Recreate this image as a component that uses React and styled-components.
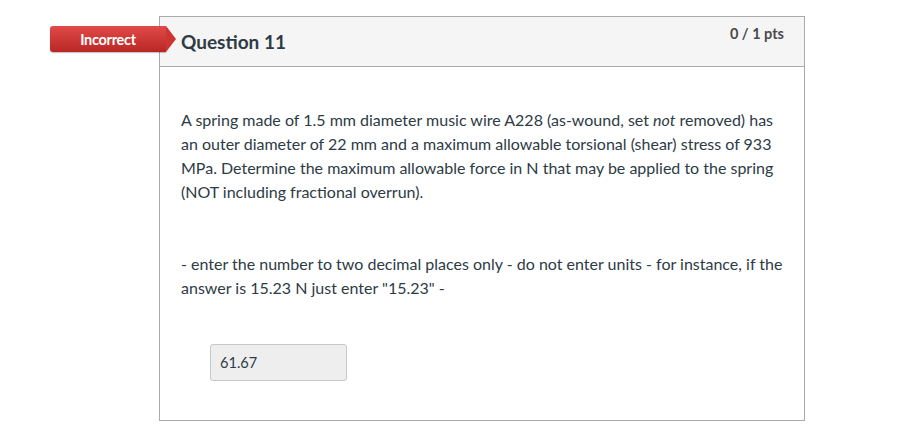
import React from "react";
import styled, { createGlobalStyle } from "styled-components";

const Global = createGlobalStyle`
  html, body { margin: 0; padding: 0; background: #fff; }
  body { font-family: Lato, "Open Sans", "Liberation Sans", sans-serif; color: #2d3b45; }
`;

const Page = styled.div`
  width: 904px;
  height: 436px;
  padding: 16px 0 0 159px;
  box-sizing: border-box;
`;

const Card = styled.div`
  position: relative;
  width: 646px;
  height: 405px;
  box-sizing: border-box;
  border: 1px solid #aaaaaa;
  display: flex;
  flex-direction: column;
`;

const Badge = styled.div`
  position: absolute;
  left: -110px;
  top: 9px;
  width: 116px;
  height: 26px;
  box-sizing: border-box;
  border-radius: 3px 0 0 3px;
  background: linear-gradient(#e14a48, #b92724);
  color: #fff;
  font-size: 14.5px;
  font-weight: 700;
  display: flex;
  align-items: center;
  justify-content: center;
  letter-spacing: -0.3px;
  box-shadow: 0 1px 1px rgba(0,0,0,0.25);
  &::after {
    content: "";
    position: absolute;
    right: -10px;
    top: 0;
    border-top: 13px solid transparent;
    border-bottom: 13px solid transparent;
    border-left: 10px solid #cc3532;
  }
`;

const Header = styled.div`
  height: 50px;
  box-sizing: border-box;
  background: #f5f5f5;
  border-bottom: 1px solid #aaaaaa;
  display: flex;
  justify-content: space-between;
  align-items: flex-start;
  padding: 0 20px 0 21px;
`;

const Title = styled.h2`
  margin: 0;
  padding-top: 13px;
  font-size: 19px;
  font-weight: 700;
  color: #2d3b45;
  line-height: 24px;
`;

const Points = styled.div`
  padding-top: 8px;
  font-size: 14.5px;
  font-weight: 700;
  color: #4a4a4a;
  line-height: 18px;
`;

const Body = styled.div`
  padding: 29px 21px 0 21px;
  font-size: 16px;
  line-height: 24px;
  color: #2d3b45;
`;

const Para = styled.p`
  margin: 12px 0;
  min-height: 24px;
`;

const AnswerBox = styled.div`
  margin: 44px 0 0 29px;
  width: 137px;
  height: 37px;
  flex-shrink: 0;
  box-sizing: border-box;
  background: #eeeeee;
  border: 1px solid #c8c8c8;
  border-radius: 3px;
  padding: 0 9px;
  display: flex;
  align-items: center;
  font-size: 14.6px;
  color: #2d3b45;
`;

export default function App() {
  return (
    <>
      <Global />
      <Page>
        <Card>
          <Badge>Incorrect</Badge>
          <Header>
            <Title>Question 11</Title>
            <Points>0 / 1 pts</Points>
          </Header>
          <Body>
            <Para>
              A spring made of 1.5 mm diameter music wire A228 (as-wound, set <em>not</em> removed) has an outer diameter of 22 mm and a maximum allowable torsional (shear) stress of 933 MPa. Determine the maximum allowable force in N that may be applied to the spring (NOT including fractional overrun).
            </Para>
            <Para>&nbsp;</Para>
            <Para>
              - enter the number to two decimal places only - do not enter units - for instance, if the answer is 15.23 N just enter "15.23" -
            </Para>
            <AnswerBox>61.67</AnswerBox>
          </Body>
        </Card>
      </Page>
    </>
  );
}
